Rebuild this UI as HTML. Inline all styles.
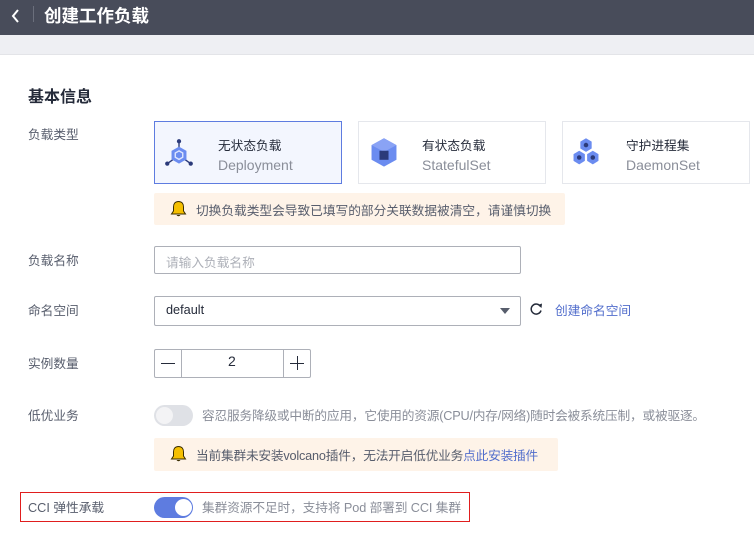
<!DOCTYPE html>
<html><head><meta charset="utf-8"><style>
*{margin:0;padding:0;box-sizing:border-box}
body{width:754px;height:544px;overflow:hidden;background:#fff;font-family:"Liberation Sans","Noto Sans CJK SC",sans-serif;font-size:12.7px;color:#252b3a;position:relative}
.a{position:absolute}
.hd{left:0;top:0;width:754px;height:35px;background:#484c5a}
.band{left:0;top:35px;width:754px;height:20px;background:#eeeff3;border-bottom:1px solid #e3e4e8}
.lbl{left:28px;color:#575d6c}
.card{top:121px;width:188px;height:63px;border:1px solid #e5e7ec;background:#fff}
.card .t{position:absolute;left:63px;top:13px;color:#252b3a}
.card .s{position:absolute;left:63px;top:35px;font-size:14px;color:#8a8e99}
.warn{background:#fef3e8;border-radius:2px;color:#575d6c}
.inp{border:1px solid #adb0b8;border-radius:2px;background:#fff}
</style></head><body>
<div class="a hd"></div>
<svg class="a" style="left:10px;top:8px" width="12" height="16"><path d="M8 2 L3 8 L8 14" stroke="#fff" stroke-width="2" fill="none"/></svg>
<div class="a" style="left:33px;top:6px;width:1px;height:16px;background:#6b6f7c"></div>
<div class="a" style="left:44px;top:3px;color:#fff;font-size:17.5px;font-weight:bold">创建工作负载</div>
<div class="a band"></div>
<div class="a" style="left:28px;top:83px;font-size:16px;font-weight:bold;color:#252b3a">基本信息</div>

<div class="a lbl" style="top:124px">负载类型</div>
<div class="a card" style="left:154px;border-color:#5e7ce0;background:#f3f6fe">
<svg style="position:absolute;left:8px;top:15px" width="32" height="32" viewBox="0 0 30 30"><line x1="15" y1="4" x2="15" y2="12" stroke="#2b3a7a" stroke-width="1.3"/><line x1="4" y1="25" x2="11" y2="20" stroke="#2b3a7a" stroke-width="1.3"/><line x1="26" y1="25" x2="19" y2="20" stroke="#2b3a7a" stroke-width="1.3"/><polygon points="15,9 22,13 22,21 15,25 8,21 8,13" fill="#6b8cf0"/><polygon points="15,13 18.5,15 18.5,19 15,21 11.5,19 11.5,15" fill="none" stroke="#dde5ff" stroke-width="1.3"/><circle cx="15" cy="4" r="2" fill="#2b3a7a"/><circle cx="4" cy="25" r="2" fill="#2b3a7a"/><circle cx="26" cy="25" r="2" fill="#2b3a7a"/></svg>
<div class="t">无状态负载</div><div class="s">Deployment</div></div>
<div class="a card" style="left:358px">
<svg style="position:absolute;left:8px;top:14px" width="34" height="34" viewBox="0 0 30 30"><polygon points="15,2 26,8 26,21 15,27 4,21 4,8" fill="#6b8cf0"/><polygon points="15,2 26,8 15,14 4,8" fill="#8aa3f5"/><polygon points="11,13 19,13 19,21 11,21" fill="#2b3a7a"/></svg>
<div class="t">有状态负载</div><div class="s">StatefulSet</div></div>
<div class="a card" style="left:562px">
<svg style="position:absolute;left:6px;top:14px" width="34" height="34" viewBox="0 0 30 30"><polygon points="15,2 20,5 20,11 15,14 10,11 10,5" fill="#6b8cf0"/><polygon points="9,13 14,16 14,22 9,25 4,22 4,16" fill="#6b8cf0"/><polygon points="21,13 26,16 26,22 21,25 16,22 16,16" fill="#6b8cf0"/><circle cx="15" cy="8" r="2" fill="#2b3a7a"/><circle cx="9" cy="19" r="2" fill="#2b3a7a"/><circle cx="21" cy="19" r="2" fill="#2b3a7a"/></svg>
<div class="t">守护进程集</div><div class="s">DaemonSet</div></div>

<div class="a warn" style="left:154px;top:193px;width:411px;height:32px">
<svg style="position:absolute;left:16px;top:7px" width="17" height="18" viewBox="0 0 17 18"><path d="M8.5 1.5 C5 1.5 3.5 4 3.5 7 L3.5 11 L1.5 14 L15.5 14 L13.5 11 L13.5 7 C13.5 4 12 1.5 8.5 1.5Z" fill="#f5bf00" stroke="#3a2e00" stroke-width="1"/><path d="M6.5 15 Q8.5 17.5 10.5 15" fill="#3a2e00"/></svg>
<span style="position:absolute;left:42px;top:7px">切换负载类型会导致已填写的部分关联数据被清空，请谨慎切换</span></div>

<div class="a lbl" style="top:250px">负载名称</div>
<div class="a inp" style="left:154px;top:246px;width:367px;height:28px"><span style="position:absolute;left:11px;top:5px;color:#adb0b8">请输入负载名称</span></div>

<div class="a lbl" style="top:300px">命名空间</div>
<div class="a inp" style="left:154px;top:296px;width:367px;height:30px"><span style="position:absolute;left:11px;top:6px;color:#252b3a">default</span><svg style="position:absolute;right:10px;top:11px" width="10" height="6"><polygon points="0,0 10,0 5,6" fill="#575d6c"/></svg></div>
<svg class="a" style="left:529px;top:302px" width="14" height="14" viewBox="0 0 14 14"><path d="M11.5 4.5 A5 5 0 1 0 12 8.5" stroke="#252b3a" stroke-width="1.5" fill="none"/><polygon points="9,3 13,1.5 12.5,6" fill="#252b3a"/></svg>
<div class="a" style="left:555px;top:300px;color:#526ecc">创建命名空间</div>

<div class="a lbl" style="top:353px">实例数量</div>
<div class="a inp" style="left:154px;top:349px;width:157px;height:29px"></div>
<div class="a" style="left:181px;top:349px;width:1px;height:29px;background:#adb0b8"></div>
<div class="a" style="left:283px;top:349px;width:1px;height:29px;background:#adb0b8"></div>
<div class="a" style="left:161px;top:363px;width:14px;height:1px;background:#252b3a"></div>
<div class="a" style="left:290px;top:363px;width:14px;height:1px;background:#252b3a"></div>
<div class="a" style="left:297px;top:356px;width:1px;height:14px;background:#252b3a"></div>
<div class="a" style="left:228px;top:353px;font-size:14px">2</div>

<div class="a lbl" style="top:405px">低优业务</div>
<div class="a" style="left:154px;top:405px;width:39px;height:21px;border-radius:11px;background:#dfe1e6"></div>
<div class="a" style="left:156px;top:407px;width:17px;height:17px;border-radius:50%;background:#f3f3f5"></div>
<div class="a" style="left:202px;top:405px;color:#8a8e99;letter-spacing:-0.2px">容忍服务降级或中断的应用，它使用的资源(CPU/内存/网络)随时会被系统压制，或被驱逐。</div>

<div class="a warn" style="left:154px;top:438px;width:404px;height:33px">
<svg style="position:absolute;left:16px;top:7px" width="17" height="18" viewBox="0 0 17 18"><path d="M8.5 1.5 C5 1.5 3.5 4 3.5 7 L3.5 11 L1.5 14 L15.5 14 L13.5 11 L13.5 7 C13.5 4 12 1.5 8.5 1.5Z" fill="#f5bf00" stroke="#3a2e00" stroke-width="1"/><path d="M6.5 15 Q8.5 17.5 10.5 15" fill="#3a2e00"/></svg>
<span style="position:absolute;left:42px;top:7px;letter-spacing:-0.2px">当前集群未安装volcano插件，无法开启低优业务<span style="color:#526ecc">点此安装插件</span></span></div>

<div class="a" style="left:20px;top:492px;width:450px;height:30px;border:1px solid #e01e1e"></div>
<div class="a lbl" style="top:497px">CCI 弹性承载</div>
<div class="a" style="left:154px;top:497px;width:39px;height:21px;border-radius:11px;background:#5e7ce0"></div>
<div class="a" style="left:175px;top:499px;width:17px;height:17px;border-radius:50%;background:#fff"></div>
<div class="a" style="left:202px;top:497px;color:#8a8e99;letter-spacing:-0.1px">集群资源不足时，支持将 Pod 部署到 CCI 集群</div>
</body></html>
